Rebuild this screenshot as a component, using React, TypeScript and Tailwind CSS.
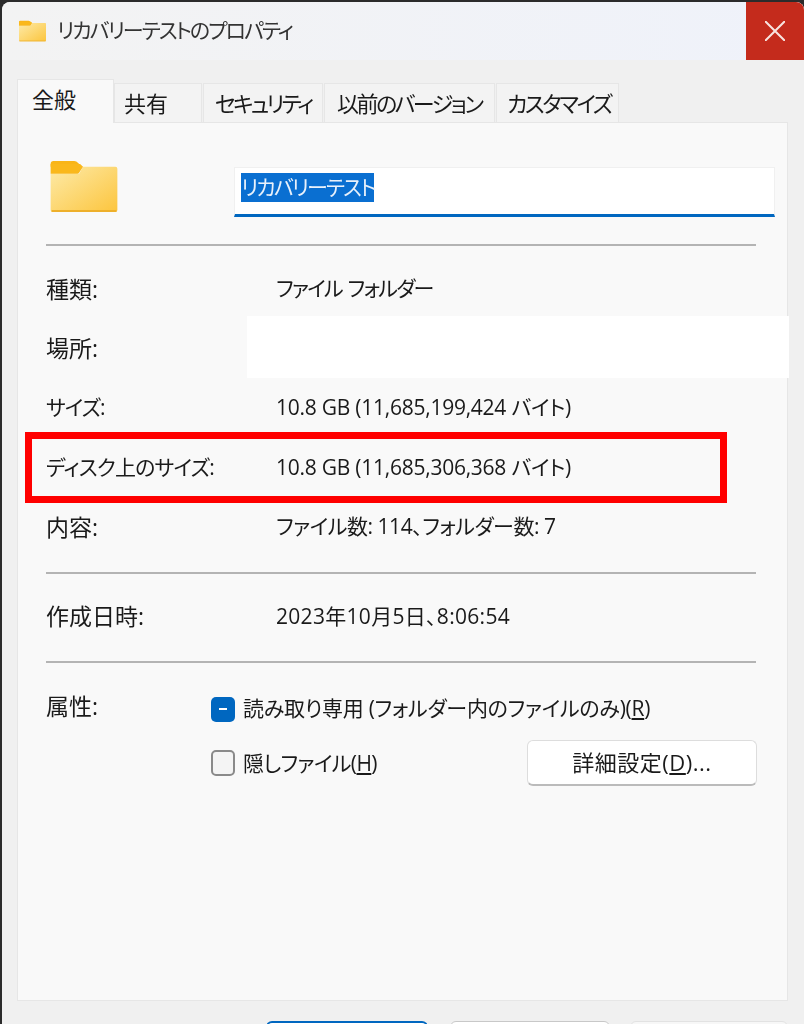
const font = 'font-["Open_Sans","Noto_Sans_CJK_JP",sans-serif] [font-feature-settings:"palt"]';

const Folder = ({ className }: { className: string }) => (
  <svg viewBox="0 0 68 54" className={className}>
    <defs>
      <linearGradient id="folderFill" x1="0" y1="0" x2="1" y2="1">
        <stop offset="0" stopColor="#fdeaa8" />
        <stop offset="1" stopColor="#fcc53d" />
      </linearGradient>
    </defs>
    <path d="M0 4 a3 3 0 0 1 3-3 h21 a6 6 0 0 1 4 2 l4 4 h-32 z" fill="#f9b518" />
    <path d="M0 14 h29 l4-7 h33 a2 2 0 0 1 2 2 v42 a2 2 0 0 1-2 2 h-64 a2 2 0 0 1-2-2 z" fill="url(#folderFill)" />
    <path d="M0 4 h30 l3 3 l-4 6 a2 2 0 0 1-2 1 h-27 z" fill="#fab81c" />
    <path d="M1 52 h66" stroke="#eeb02b" strokeWidth="2" />
  </svg>
);

const Tab = ({ label, className }: { label: string; className: string }) => (
  <div className={`flex h-[39px] items-center whitespace-nowrap border border-b-0 border-[#e6e6e6] bg-[#f3f3f3] pl-[9px] text-[22px] text-[#1a1a1a] ${className}`}>
    {label}
  </div>
);

const Divider = ({ className = '' }: { className?: string }) => <div className={`h-[2px] w-[710px] bg-[#b4b4b4] ${className}`} />;

const InfoRow = ({
  label,
  value,
  labelClass = '',
  valueClass = '',
  className = 'h-[59.5px]',
}: {
  label: string;
  value?: string;
  labelClass?: string;
  valueClass?: string;
  className?: string;
}) => (
  <div className={`flex items-center text-[21px] text-[#1a1a1a] ${className}`}>
    <div className={`w-[230px] shrink-0 whitespace-nowrap ${labelClass}`}>{label}</div>
    <div className={`whitespace-nowrap ${valueClass}`}>{value}</div>
  </div>
);

const Key = ({ children }: { children: string }) => <span className="underline underline-offset-2">{children}</span>;

export default function App() {
  return (
    <div lang="ja" className={`relative h-[1024px] w-[804px] overflow-hidden bg-[#2b2b2b] ${font}`}>
      <div className="h-full w-full pl-[2px] pt-[2px] blur-[0.45px]">
        <div className="h-full w-full overflow-hidden rounded-tl-[8px] rounded-tr-[8px] bg-[#f0f0f0]">
          <div className="flex h-[58px] items-center bg-gradient-to-r from-[#f3f3f3] to-[#eff2fa] pl-[17px]">
            <Folder className="h-[22px] w-[27px]" />
            <div className="ml-[11px] flex-1 text-[21px] tracking-[-1.95px] text-[#333333]">リカバリーテストのプロパティ</div>
            <div className="flex h-[58px] w-[58px] items-center justify-center bg-[#c42b1c]">
              <svg viewBox="0 0 20 20" className="h-[20px] w-[20px]" stroke="#f8e4e0" strokeWidth="2">
                <path d="M0 0 L20 20 M20 0 L0 20" />
              </svg>
            </div>
          </div>

          <div className="ml-[15px] flex h-[62px] items-end">
            <div className="relative z-10 -mb-px flex h-[44px] w-[97px] items-center border border-b-0 border-[#e6e6e6] bg-[#f9f9f9] pb-[4px] pl-[14px] text-[22px] text-[#1a1a1a]">全般</div>
            <Tab label="共有" className="w-[88px]" />
            <Tab label="セキュリティ" className="ml-px w-[120px] pl-[11px] tracking-[-2.9px]" />
            <Tab label="以前のバージョン" className="ml-px w-[171px] pl-[12px] tracking-[-2.5px]" />
            <Tab label="カスタマイズ" className="ml-px w-[123px] pl-[10px] tracking-[-2.4px]" />
          </div>

          <div className="ml-[15px] h-[879px] w-[771px] border border-[#e6e6e6] bg-[#f9f9f9] pl-[28px]">
            <div className="flex h-[121px] items-start">
              <Folder className="ml-[4px] mt-[37px] h-[53px] w-[68px]" />
              <div className="ml-[116px] mt-[44px] h-[50px] w-[541px] border border-[#f0f0f0] border-b-[3px] border-b-[#0067c0] bg-white pl-[6px] pt-[5px]">
                <span className="inline-block h-[29px] bg-[#0a6fd1] text-[21px] leading-[29px] tracking-[-1.9px] text-[#e8f1fb]">リカバリーテスト</span>
              </div>
            </div>
            <Divider />
            <div className="mt-[13px]">
              <InfoRow label="種類:" labelClass="text-[23px]" value="ファイル フォルダー" valueClass="tracking-[-1.7px] [word-spacing:2px]" />
              <InfoRow label="場所:" labelClass="text-[23px]" />
              <InfoRow label="サイズ:" labelClass="tracking-[-1px]" value="10.8 GB (11,685,199,424 バイト)" valueClass="tracking-[-0.25px]" />
              <InfoRow label="ディスク上のサイズ:" labelClass="tracking-[-0.8px]" value="10.8 GB (11,685,306,368 バイト)" valueClass="tracking-[-0.25px]" />
              <InfoRow label="内容:" labelClass="text-[23px]" value="ファイル数: 114、フォルダー数: 7" valueClass="tracking-[-0.45px]" />
            </div>
            <Divider className="mt-[15px]" />
            <InfoRow label="作成日時:" labelClass="text-[23px]" value="2023年10月5日、8:06:54" valueClass="tracking-[0.3px]" className="mt-[21px] h-[44px]" />
            <Divider className="mt-[22px]" />

            <div className="mt-[34px] flex text-[21px] text-[#1a1a1a]">
              <div className="-mt-[8px] w-[165px] shrink-0 text-[23px]">属性:</div>
              <div className="w-[546px]">
                <div className="flex h-[25px] items-center whitespace-nowrap">
                  <span className="flex h-[25px] w-[24px] items-center justify-center rounded-[5px] bg-[#0067c0]">
                    <span className="h-[2px] w-[8px] bg-white" />
                  </span>
                  <span className="ml-[8px] tracking-[-0.25px]">読み取り専用 (フォルダー内のファイルのみ)(<Key>R</Key>)</span>
                </div>
                <div className="mt-[26px] flex items-center justify-between">
                  <div className="flex items-center">
                    <span className="h-[26px] w-[24px] rounded-[5px] border-2 border-[#8a8a8a] bg-[#f4f4f4]" />
                    <span className="ml-[8px] tracking-[-0.6px]">隠しファイル(<Key>H</Key>)</span>
                  </div>
                  <button className="-my-[10px] h-[46px] w-[230px] shrink-0 rounded-[6px] border border-[#dddddd] border-b-2 border-b-[#bbbbbb] bg-white text-[22px] tracking-[0.5px] text-[#1a1a1a]">
                    詳細設定(<Key>D</Key>)...
                  </button>
                </div>
              </div>
            </div>
          </div>

          <div className="ml-[264px] mt-[20px] flex">
            <div className="h-[40px] w-[162px] rounded-t-[6px] border-2 border-[#0067c0] bg-white" />
            <div className="ml-[22px] h-[40px] w-[160px] rounded-t-[6px] border border-[#c8c8c8] bg-white" />
            <div className="ml-[20px] h-[40px] w-[158px] rounded-t-[6px] border border-[#e2e2e2] bg-[#f7f7f7]" />
          </div>
        </div>
      </div>

      <div className="absolute left-[247px] top-[316px] h-[62px] w-[542px] bg-white" />
      <div className="absolute left-[25px] top-[432px] h-[71px] w-[702px] border-[7px] border-[#ff0000]" />
    </div>
  );
}
